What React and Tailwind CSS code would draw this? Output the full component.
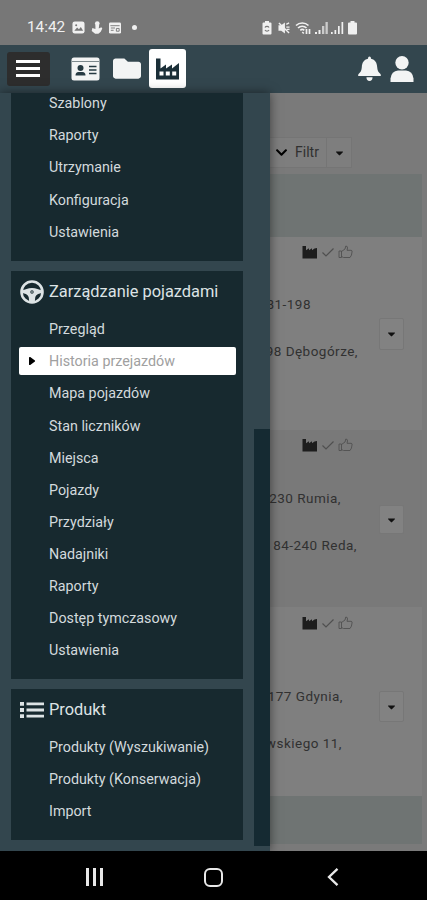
import React from "react";
import { FaFolder, FaChevronDown, FaCaretDown, FaCaretRight } from "react-icons/fa";

const menu = [
  {
    items: ["Szablony", "Raporty", "Utrzymanie", "Konfiguracja", "Ustawienia"],
  },
  {
    title: "Zarządzanie pojazdami",
    icon: "wheel",
    items: [
      "Przegląd",
      "Historia przejazdów",
      "Mapa pojazdów",
      "Stan liczników",
      "Miejsca",
      "Pojazdy",
      "Przydziały",
      "Nadajniki",
      "Raporty",
      "Dostęp tymczasowy",
      "Ustawienia",
    ],
  },
  {
    title: "Produkt",
    icon: "list",
    items: ["Produkty (Wyszukiwanie)", "Produkty (Konserwacja)", "Import"],
  },
];

const trips = [
  {
    id: 1,
    row: "h-[193px] bg-[#7f7f7f]",
    icons: "mt-[6px]",
    lines: "mt-[34px]",
    from: ["81-198", "w-[44px]"],
    to: ["98 Dębogórze,", "w-[91px]"],
    button: "mt-[81px] h-[32px]",
  },
  {
    id: 2,
    row: "h-[177px] bg-[#797979]",
    icons: "mt-[6px]",
    lines: "mt-[35px]",
    from: ["230 Rumia,", "w-[74px]"],
    to: ["84-240 Reda,", "w-[90px]"],
    button: "mt-[75px] h-[29px]",
  },
  {
    id: 3,
    row: "h-[189px] bg-[#7f7f7f]",
    icons: "mt-[7px]",
    lines: "mt-[55px]",
    from: ["177 Gdynia,", "w-[76px]"],
    to: ["wskiego 11,", "w-[75px]"],
    button: "mt-[84px] h-[31px]",
  },
];

const FactoryIcon = ({ className }) => (
  <svg viewBox="0 0 26 24" className={className} fill="currentColor">
    <path
      fillRule="evenodd"
      d="M1 1.500h4.500v10L11 7.500v4l6-4v4l7-5.500v16.500H1zM4.500 14.500v4h4v-4zM10.800 14.500v4h4v-4zM17.200 14.500v4h4v-4z"
    />
  </svg>
);

const SolidFactoryIcon = ({ className }) => (
  <svg viewBox="0 0 16 14" className={className} fill="currentColor">
    <path d="M0.500 1h3.500v4.200L7 3.300v2l3-2v2l2.500-1.700L15 3v10.500H0.500z" />
  </svg>
);

const WheelIcon = () => (
  <svg viewBox="0 0 24 24" className="h-6 w-6" fill="none" stroke="currentColor">
    <circle cx="12" cy="12" r="10.500" strokeWidth="2.600" />
    <path
      fill="currentColor"
      stroke="none"
      fillRule="evenodd"
      d="M2 10.500C5 9.500 8 8 12 8s7 1.500 10 2.500v2.800c-4.500 0-6.200 2.200-6.800 4.400L14.800 22H9.200l-.4-4.300C8.200 15.500 6.500 13.300 2 13.300zM12 10.300a1.700 1.700 0 1 0 0 3.400 1.700 1.700 0 0 0 0-3.400z"
    />
    <circle cx="12" cy="12" r="0.800" fill="currentColor" stroke="none" />
  </svg>
);

const ListIcon = () => (
  <svg viewBox="0 0 24 18" className="h-[18px] w-6" fill="currentColor">
    <path d="M0 1h4v3.800H0zM0 7.100h4v3.800H0zM0 13.200h4V17H0zM6.500 1.500H24v2.800H6.500zM6.500 7.600H24v2.800H6.500zM6.500 13.700H24v2.800H6.500z" />
  </svg>
);

const StatusBar = () => (
  <div className="flex h-[45px] items-center bg-[#777777] pt-[10px] pl-[27px] text-[#f0f0f0]">
    <span className="w-[39px] text-[15.300px] leading-none">14:42</span>
    <svg viewBox="0 0 14 14" className="ml-[6px] h-[13px] w-[13px]">
      <rect x="0.500" y="0.500" width="13" height="13" rx="2.500" fill="currentColor" />
      <path d="M2.500 10.500l3-3.500 2 2 2-2.500 2.500 4z" fill="#777777" />
      <circle cx="4.500" cy="4.500" r="1.100" fill="#777777" />
    </svg>
    <svg viewBox="0 0 12 14" className="ml-[6px] h-[13px] w-[12px]" fill="currentColor">
      <circle cx="6.300" cy="2.700" r="2.500" />
      <path d="M4.300 4h4l-.4 4 2.800-1.200 1 1.400-1.700 3.500L7.500 13.800H4L.3 10.700 1 7.500l3.300 1z" />
    </svg>
    <svg viewBox="0 0 14 13" className="ml-[5px] h-[12px] w-[14px]">
      <rect x="0.500" y="0.500" width="13" height="12" rx="1.500" fill="currentColor" />
      <path d="M2 4h10M2.500 6.500h4.500M2.500 9h3M8.500 7h3v3h-3z" stroke="#777777" fill="none" />
    </svg>
    <span className="ml-[10px] h-[5px] w-[5px] rounded-full bg-[#f0f0f0]" />
    <div className="mr-[70px] ml-auto flex items-center">
      <svg viewBox="0 0 10 14" className="h-[14px] w-[10px]">
        <path d="M3 0h4v1.500h1.500q1 0 1 1v10q0 1-1 1h-7q-1 0-1-1v-10q0-1 1-1H3z" fill="currentColor" />
        <path d="M3 6.500a2.300 2.300 0 0 1 4 0M7 9a2.300 2.300 0 0 1-4 0" stroke="#777777" fill="none" strokeWidth="1.200" />
      </svg>
      <svg viewBox="0 0 13 13" className="ml-[6px] h-[12px] w-[12px]" fill="currentColor">
        <path d="M0.500 3.500h3L7.500 0.500v12l-4-3h-3z" />
        <path d="M1 1l11 11M9 2.500l3-1.500M9 5.500h3.500M9.500 8h3" stroke="currentColor" strokeWidth="1.500" />
      </svg>
      <svg viewBox="0 0 17 14" className="ml-[5px] h-[14px] w-[17px]" fill="none" stroke="currentColor" strokeWidth="1.600">
        <path d="M1 4.500a9 9 0 0 1 12.500 0M3 7a6 6 0 0 1 8.500 0M5.300 9.300a3 3 0 0 1 4 0" />
        <path d="M7.300 11l1.500 1.500M11.500 8v5M14.500 13V8" strokeWidth="1.700" />
      </svg>
      <svg viewBox="0 0 13 13" className="ml-[3px] h-[13px] w-[13px]" fill="currentColor">
        <path d="M0 11h2v2H0zM3.500 9h2v4h-2z" />
        <path d="M7 5h2.300v8H7zM10.500 1h2.300v12h-2.300z" opacity="0.700" />
      </svg>
      <svg viewBox="0 0 13 13" className="ml-[3px] h-[13px] w-[13px]" fill="currentColor">
        <path d="M0 11h1.700v2H0zM3.500 9h1.700v4H3.500zM7 5h1.700v8H7zM10.500 1h1.700v12h-1.700z" />
      </svg>
      <svg viewBox="0 0 9 14" className="ml-[4px] h-[14px] w-[9px]" fill="currentColor">
        <path d="M2.500 0h4v1.500H8q1 0 1 1v10q0 1-1 1H1q-1 0-1-1v-10q0-1 1-1h1.500z" />
      </svg>
    </div>
  </div>
);

const Header = () => (
  <header className="flex h-12 items-center bg-[#33464e] pb-[1px] pl-[7px] text-[#f3f4f4]">
    <button className="flex h-[34px] w-[43px] flex-col items-center justify-center gap-[4px] rounded-[3px] bg-[#2d2d2d] pr-[1px]">
      <span className="h-[3px] w-6 bg-white" />
      <span className="h-[3px] w-6 bg-white" />
      <span className="h-[3px] w-6 bg-white" />
    </button>
    <svg viewBox="0 0 29 24" className="ml-[21px] h-[24px] w-[29px]">
      <rect x="0.500" y="0.500" width="28" height="23" rx="2.500" fill="currentColor" />
      <path d="M1 4.500h27" stroke="#7d898d" strokeWidth="1" />
      <circle cx="9.500" cy="11" r="3" fill="#263a42" />
      <path d="M4.500 18.500q0-3.500 3-3.500h4q3 0 3 3.500z" fill="#263a42" />
      <path d="M18 9.500h7.500M18 13h7.500M18 16.500h7.500" stroke="#263a42" strokeWidth="1.300" />
    </svg>
    <FaFolder className="ml-[13px] h-[27px] w-[28px]" preserveAspectRatio="none" />
    <span className="ml-[8px] flex h-[39px] w-[37px] items-center justify-center rounded-[3px] bg-white text-[#1b2f38]">
      <FactoryIcon className="h-[24px] w-[26px]" />
    </span>
    <svg viewBox="0 0 24 26" className="mr-[9px] ml-auto h-[26px] w-[23px]" fill="currentColor">
      <path d="M12 0q1.600 0 1.600 2.200C18 3.200 19.800 6.500 20 11c.2 3.700 1.300 5.500 3.200 7q1 1 .5 2.200H.3Q-.2 19 .8 18C2.700 16.500 3.800 14.700 4 11c.2-4.500 2-7.800 6.400-8.800Q10.400 0 12 0zM8.800 21.500h6.400Q15 25.500 12 25.500t-3.200-4z" />
    </svg>
    <svg viewBox="0 0 24 26" className="mr-[13px] h-[26px] w-[24px]" fill="currentColor">
      <circle cx="12" cy="6.700" r="6.700" />
      <path d="M0.500 26v-3.500Q1.500 15 8 14.500h8q6.500.5 7.500 8V26z" />
    </svg>
  </header>
);

const MenuItem = ({ label }) => {
  const active = label === "Historia przejazdów";
  return (
    <li className="flex h-[32.080px] items-center pr-[7px] pl-2">
      <a
        className={
          active
            ? "flex h-[28px] w-full items-center rounded-[2px] bg-white pt-[2px] text-[#a0a0a0]"
            : "flex h-[28px] w-full items-center pt-[2px] text-[#d3dadd]"
        }
      >
        <span className="flex w-[30px] shrink-0 justify-center">
          {active && <FaCaretRight className="mr-[3px] mb-[2px] h-[14px] w-[7px] text-black" preserveAspectRatio="none" />}
        </span>
        {label}
      </a>
    </li>
  );
};

const Sidebar = () => (
  <aside className="z-10 flex h-full w-[270px] shrink-0 overflow-hidden bg-[#33464e] pl-[11px] text-[14.300px] shadow-[0_0_10px_rgba(0,0,0,0.5)]">
    <div className="flex w-[232px] flex-col gap-[10px]">
      {menu.map((group, i) => (
        <section
          key={i}
          className={
            group.title
              ? "shrink-0 bg-[#17292f]"
              : "h-[168px] shrink-0 overflow-hidden bg-[#17292f]"
          }
        >
          {group.title && (
            <h2
              className={
                group.icon === "wheel"
                  ? "flex h-[42px] items-center gap-[5px] pl-[9px] text-[16.400px] text-[#dde3e5]"
                  : "flex h-[42px] items-center gap-[5px] pt-[1px] pl-[9px] text-[16.400px] text-[#dde3e5]"
              }
            >
              {group.icon === "wheel" ? <WheelIcon /> : <ListIcon />}
              {group.title}
            </h2>
          )}
          <ul className={group.title ? "pb-[13px]" : "-mt-[6px]"}>
            {group.items.map((label) => (
              <MenuItem key={label} label={label} />
            ))}
          </ul>
        </section>
      ))}
    </div>
    <div className="ml-auto w-4 pt-[336px]">
      <div className="h-[417px] bg-[#152a32]" />
    </div>
  </aside>
);

const TripRow = ({ trip }) => (
  <div className={`flex justify-between ${trip.row}`}>
    <div>
      <div className={`flex h-[17px] items-center pl-[35px] text-[#505050] ${trip.icons}`}>
        <SolidFactoryIcon className="h-[14px] w-[16px] text-[#1d1d1d]" />
        <svg viewBox="0 0 12 12" className="ml-[4px] h-[12px] w-[12px]" fill="none" stroke="currentColor" strokeWidth="1.200">
          <path d="M0.500 6.500l3.500 3.500L11.500 2.500" />
        </svg>
        <svg viewBox="0 0 15 14" className="ml-[4px] h-[14px] w-[15px]" fill="none" stroke="currentColor" strokeWidth="0.900">
          <path d="M1 6h2.500v6.500H1zM3.500 6.500L7 4l.8-3q1.800 0 1.700 2L9 5.300h4.200q1.300.3.800 1.700-.1 3.500-2 5.500H5.500l-2-1" />
        </svg>
      </div>
      <div className={`flex flex-col text-[13.500px] tracking-[0.480px] whitespace-nowrap text-[#313131] ${trip.lines}`}>
        <p className={`flex h-[20px] items-center justify-end ${trip.from[1]}`}>{trip.from[0]}</p>
        <p className={`mt-[27px] flex h-[20px] items-center justify-end ${trip.to[1]}`}>{trip.to[0]}</p>
      </div>
    </div>
    <button
      className={`mr-[18px] flex w-[25px] items-center justify-center rounded-[2px] border border-[#777777] bg-[#828282] text-[#111111] ${trip.button}`}
    >
      <FaCaretDown className="h-[12px] w-[9px]" />
    </button>
  </div>
);

const App = () => {
  return (
    <div className="flex h-[900px] w-[427px] flex-col overflow-hidden bg-[#7a7a7a] font-['Roboto','Liberation_Sans',sans-serif]">
      <StatusBar />
      <Header />
      <div className="flex h-[758px]">
        <Sidebar />
        <main className="-ml-[3px] flex-1 pr-[5px]">
          <div className="flex h-[81px] items-start pt-[44px]">
            <button className="flex h-[31px] w-[60px] items-center gap-[7px] border border-[#757575] bg-[#7e7e7e] pl-[7px] text-[14px] text-[#303030]">
              <FaChevronDown className="h-[13px] w-[13px] shrink-0 text-black" />
              Filtr
            </button>
            <button className="flex h-[31px] w-[25px] items-center justify-center border border-l-0 border-[#757575] bg-[#7e7e7e] text-[#111111]">
              <FaCaretDown className="h-[12px] w-[9px]" />
            </button>
          </div>
          <div className="h-[63px] bg-[#6f7473]" />
          {trips.map((trip) => (
            <TripRow key={trip.id} trip={trip} />
          ))}
          <div className="h-[48px] bg-[#6f7473]" />
        </main>
      </div>
      <nav className="flex h-[49px] items-center bg-black pt-[3px] pl-[86px] text-[#e8e8e8]">
        <div className="flex h-[18px] w-[17px] justify-between">
          <span className="w-[3px] bg-[#e8e8e8]" />
          <span className="w-[3px] bg-[#e8e8e8]" />
          <span className="w-[3px] bg-[#e8e8e8]" />
        </div>
        <span className="ml-[101px] h-[19px] w-[19px] rounded-[6px] border-[2.500px] border-[#e8e8e8]" />
        <svg viewBox="0 0 12 18" className="ml-[104px] h-[18px] w-[12px]" fill="none" stroke="currentColor" strokeWidth="2.300">
          <path d="M10.500 0.800L2 9l8.500 8.200" />
        </svg>
      </nav>
    </div>
  );
};

export default App;
